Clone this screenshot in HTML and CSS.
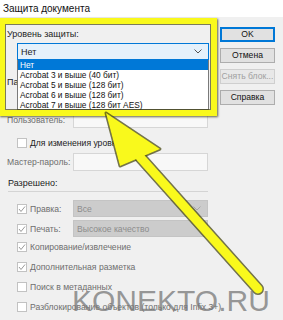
FILE: index.html
```html
<!DOCTYPE html>
<html lang="ru">
<head>
	<meta charset="UTF-8">
	<meta name="viewport" content="width=device-width, initial-scale=1.0">
	<title>Защита документа</title>
	<link rel="stylesheet" href="styles.css">
</head>
<body>

	<div class="window">

		<div class="titlebar">Защита документа</div>

		<div class="dialog">

			<div class="main">

				<div class="label">Уровень защиты:</div>
				<div class="select active">
					<span>Нет</span>
					<svg class="chevron" width="8" height="5" viewBox="0 0 8 5"><polyline points="0.5,0.5 4,4 7.5,0.5" fill="none" stroke="#555" stroke-width="1"/></svg>
				</div>

				<div class="label section">Па</div>

				<div class="field first-field">
					<span class="field-label muted">Пользователь:</span>
					<span class="input"></span>
				</div>

				<div class="check-row tight">
					<span class="box"></span>
					<span>Для изменения уровня</span>
				</div>

				<div class="field tall">
					<span class="field-label muted">Мастер-пароль:</span>
					<span class="input"></span>
				</div>

				<div class="label heading">Разрешено:</div>

				<div class="field perm first">
					<span class="field-label with-box"><span class="box checked"><svg width="8" height="8" viewBox="0 0 8 8"><polyline points="1,4 3,6.5 7,1.5" fill="none" stroke="#9a9a9a" stroke-width="1"/></svg></span><span class="muted">Правка:</span></span>
					<span class="select disabled">
						<span>Все</span>
						<svg class="chevron" width="8" height="5" viewBox="0 0 8 5"><polyline points="0.5,0.5 4,4 7.5,0.5" fill="none" stroke="#a8a8a8" stroke-width="1"/></svg>
					</span>
				</div>

				<div class="field perm">
					<span class="field-label with-box"><span class="box checked"><svg width="8" height="8" viewBox="0 0 8 8"><polyline points="1,4 3,6.5 7,1.5" fill="none" stroke="#9a9a9a" stroke-width="1"/></svg></span><span class="muted">Печать:</span></span>
					<span class="select disabled">
						<span>Высокое качество</span>
					</span>
				</div>

				<div class="check-row perm-check first-check">
					<span class="box checked"><svg width="8" height="8" viewBox="0 0 8 8"><polyline points="1,4 3,6.5 7,1.5" fill="none" stroke="#9a9a9a" stroke-width="1"/></svg></span>
					<span class="muted">Копирование/извлечение</span>
				</div>
				<div class="check-row perm-check">
					<span class="box checked"><svg width="8" height="8" viewBox="0 0 8 8"><polyline points="1,4 3,6.5 7,1.5" fill="none" stroke="#9a9a9a" stroke-width="1"/></svg></span>
					<span class="muted">Дополнительная разметка</span>
				</div>
				<div class="check-row perm-check">
					<span class="box"></span>
					<span class="muted">Поиск в метаданных</span>
				</div>
				<div class="check-row perm-check">
					<span class="box"></span>
					<span class="muted">Разблокирование объектов (только для Infix 3+)</span>
				</div>

			</div>

			<div class="side">
				<div class="button default">OK</div>
				<div class="button">Отмена</div>
				<div class="button off">Снять блок...</div>
				<div class="button">Справка</div>
			</div>

		</div>

		<!-- открытый список уровня защиты -->
		<ul class="dropdown">
			<li class="selected">Нет</li>
			<li>Acrobat 3 и выше (40 бит)</li>
			<li>Acrobat 5 и выше (128 бит)</li>
			<li>Acrobat 6 и выше (128 бит)</li>
			<li>Acrobat 7 и выше (128 бит AES)</li>
		</ul>

		<!-- пометки поверх скриншота -->
		<div class="frame"></div>

		<svg class="arrow" width="283" height="320" viewBox="0 0 283 320">
			<line x1="140" y1="157" x2="258" y2="289" stroke="#4a4a14" stroke-opacity="0.75" stroke-width="12" stroke-linecap="round"/>
			<polygon points="106,113 160,149 120,166" fill="#4a4a14" fill-opacity="0.75" stroke="#4a4a14" stroke-opacity="0.75" stroke-width="3" stroke-linejoin="round"/>
			<line x1="140" y1="157" x2="258" y2="289" stroke="#f9f91c" stroke-width="9" stroke-linecap="round"/>
			<polygon points="106,113 160,149 120,166" fill="#f9f91c"/>
		</svg>

		<div class="watermark">KONEKTO.RU</div>

	</div>

</body>
</html>
```

FILE: styles.css
```css
* {
	margin: 0;
	padding: 0;
	box-sizing: border-box;
}

body {
	font-family: "Liberation Sans", Arial, sans-serif;
	font-size: 8.6px;
	color: #222;
	background: #f0f0f0;
}

.window {
	position: relative;
	width: 283px;
	height: 320px;
	overflow: hidden;
}

.titlebar {
	height: 17px;
	line-height: 17px;
	padding-left: 3px;
	font-size: 10px;
	color: #111;
	background: #fff;
}

.dialog {
	display: flex;
}

.main {
	width: 213px;
	padding-left: 7px;
	white-space: nowrap;
}

.side {
	display: flex;
	flex-direction: column;
	gap: 6px;
	padding: 10px 0 0 7px;
	width: 62px;
}

.label {
	height: 12px;
	line-height: 12px;
	margin-top: 11px;
	font-size: 9px;
}

.label.section {
	margin-top: 16px;
}

.label.heading {
	margin-top: 6px;
	height: 15px;
	width: 200px;
	border-bottom: 1px solid #d4d4d4;
	margin-left: 1px;
}

.muted {
	color: #6e6e6e;
}

.select {
	display: flex;
	align-items: center;
	justify-content: space-between;
	height: 17px;
	padding: 0 6px 0 3px;
	border: 1px solid #adadad;
}

.select.active {
	margin: 3px 0 0 10px;
	width: 192px;
	background: #e5f1fb;
	border-color: #0078d7;
	font-size: 9px;
}

.select.disabled {
	flex: 1;
	background: #cccccc;
	border-color: #c4c4c4;
	color: #8c8c8c;
}

.check-row {
	display: flex;
	align-items: center;
	gap: 3px;
	height: 12px;
	padding-left: 10px;
}

.check-row.tight {
	margin-top: 9px;
}

.check-row.perm-check {
	margin-top: 8px;
}

.check-row.first-check {
	margin-top: 4px;
}

.box {
	display: flex;
	align-items: center;
	justify-content: center;
	width: 10px;
	height: 10px;
	border: 1px solid #c2c2c2;
	background: #fff;
	flex-shrink: 0;
}

.field {
	display: flex;
	align-items: stretch;
	height: 17px;
	width: 201px;
}

.field.first-field {
	margin-top: 23px;
}

.field.tall {
	height: 18px;
	margin-top: 4px;
}

.field.perm {
	margin-top: 3px;
}

.field.perm.first {
	margin-top: 8px;
}

.field-label {
	display: flex;
	align-items: center;
	width: 66px;
	flex-shrink: 0;
}

.field-label.with-box {
	gap: 3px;
	padding-left: 10px;
}

.input {
	flex: 1;
	background: #f8f8f8;
	border: 1px solid #d6d6d6;
}

.button {
	height: 15px;
	line-height: 13px;
	text-align: center;
	font-size: 8.6px;
	background: #e1e1e1;
	border: 1px solid #adadad;
	color: #111;
	white-space: nowrap;
	overflow: hidden;
}

.button.default {
	border-color: #0078d7;
	box-shadow: inset 0 0 0 1px #0078d7;
}

.button.off {
	color: #a0a0a0;
	border-color: #cfcfcf;
	background: #e8e8e8;
}

.dropdown {
	position: absolute;
	left: 17px;
	top: 60px;
	width: 192px;
	height: 50px;
	list-style: none;
	background: #fff;
	border: 1px solid #7a7a7a;
	border-top: none;
}

.dropdown li {
	height: 10px;
	line-height: 10px;
	padding-left: 2px;
	font-size: 8.3px;
	color: #111;
}

.dropdown li.selected {
	background: #0078d7;
	color: #fff;
}

.frame {
	position: absolute;
	left: -1px;
	top: 18px;
	width: 218px;
	height: 98px;
	border: 6px solid #f9f91c;
	box-shadow: inset 0 0 0 1px rgba(60, 60, 10, 0.65), 1px 1px 2px rgba(40, 40, 0, 0.7);
}

.arrow {
	position: absolute;
	left: 0;
	top: 0;
}

.watermark {
	position: absolute;
	left: 72px;
	top: 286px;
	font-size: 30px;
	line-height: 30px;
	color: rgba(120, 120, 120, 0.75);
}
```
